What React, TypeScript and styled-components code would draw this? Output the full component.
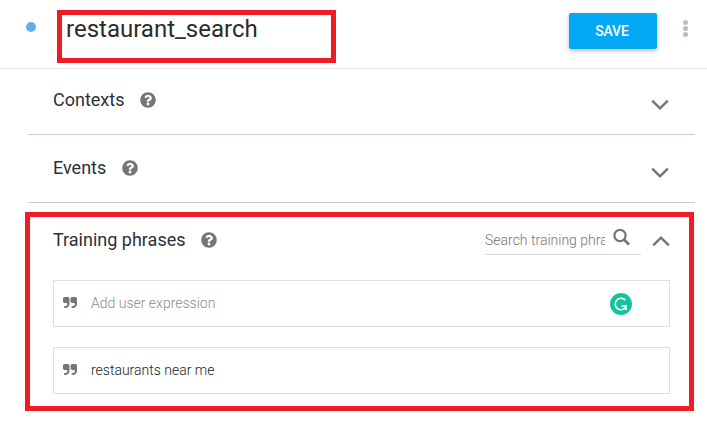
import React from 'react';
import styled, { createGlobalStyle } from 'styled-components';
import { FaQuestionCircle } from 'react-icons/fa';

const GlobalStyle = createGlobalStyle`
  * { box-sizing: border-box; }
  body { margin: 0; background: #fff; font-family: Roboto, sans-serif; }
`;

const Page = styled.main`
  width: 707px;
  height: 427px;
  overflow: hidden;
  background: #fff;
`;

const Header = styled.header`
  display: flex;
  align-items: flex-start;
  height: 69px;
  padding-left: 26px;
  border-bottom: 1px solid #e5e5e5;
`;

const StatusDot = styled.span`
  width: 10px;
  height: 10px;
  margin-top: 22px;
  border-radius: 50%;
  background: #67aeea;
`;

const TitleFrame = styled.div`
  width: 279px;
  height: 53px;
  margin: 10px 0 0 21px;
  padding-left: 4px;
  border: 5px solid #ee1c25;
`;

const Title = styled.h1`
  margin: 0;
  font-size: 24px;
  font-weight: 400;
  line-height: 28px;
  color: #2b2b2b;
`;

const SaveButton = styled.button`
  width: 88px;
  height: 36px;
  margin: 13px 0 0 233px;
  padding: 0 2px 0 0;
  border: 0;
  border-radius: 2px;
  background: #03a9f4;
  box-shadow: 0 2px 5px rgba(0, 0, 0, 0.26);
  color: #fff;
  font: 500 14px/34px Roboto, sans-serif;
  letter-spacing: -0.1px;
`;

const MenuButton = styled.div`
  display: flex;
  flex-direction: column;
  gap: 1px;
  margin: 20px 0 0 26px;
`;

const MenuDot = styled.span`
  width: 5px;
  height: 5px;
  border-radius: 50%;
  background: #b8bcc5;
`;

const Section = styled.section<{ $height: number; $top: number }>`
  display: flex;
  align-items: flex-start;
  height: ${(p) => p.$height}px;
  margin: 0 12px 0 28px;
  padding: ${(p) => p.$top}px 26px 0 25px;
  border-bottom: 1px solid #cdc7c9;
`;

const Heading = styled.h2`
  display: flex;
  align-items: center;
  gap: 15.5px;
  flex: 1;
  margin: 0;
  font-size: 18px;
  font-weight: 400;
  line-height: 22px;
  color: #2b303b;
`;

const HelpIcon = styled(FaQuestionCircle)`
  width: 16px;
  height: 16px;
  color: #757575;
`;

const ChevronIcon = styled.svg<{ $up?: boolean }>`
  flex: none;
  width: 18px;
  height: 12px;
  margin-top: ${(p) => (p.$up ? 6 : 10)}px;
  transform: ${(p) => (p.$up ? 'rotate(180deg)' : 'none')};
`;

const TrainingFrame = styled.section`
  width: 669px;
  height: 199px;
  margin: 9px 0 0 25px;
  padding: 12px 19px 0 23px;
  border: 5px solid #ee1c25;
`;

const TrainingHeader = styled.div`
  display: flex;
  align-items: flex-start;
  height: 51px;
`;

const SearchField = styled.div`
  display: flex;
  width: 156px;
  height: 26px;
  margin-right: 11px;
  border-bottom: 1px solid #dcdcdc;
`;

const SearchText = styled.span`
  width: 120px;
  overflow: hidden;
  white-space: nowrap;
  font-size: 14px;
  font-weight: 300;
  line-height: 23px;
  color: #757575;
`;

const SearchIcon = styled.svg`
  flex: none;
  width: 18px;
  height: 18px;
  margin-left: 8px;
`;

const PhraseRow = styled.div`
  display: flex;
  align-items: center;
  height: 47px;
  margin-bottom: 20px;
  padding: 0 37px 0 9px;
  border: 1px solid #dedede;
`;

const QuoteShape = styled.svg`
  flex: none;
  width: 14px;
  height: 11px;
  margin: 0 14px 2px 0;
  fill: #757575;
`;

const PhraseText = styled.span<{ $placeholder?: boolean }>`
  flex: 1;
  padding-bottom: 1px;
  font-size: 14px;
  font-weight: 300;
  line-height: 20px;
  color: ${(p) => (p.$placeholder ? '#8c8c8c' : '#222')};
`;

const AssistantBadge = styled.svg`
  width: 22px;
  height: 22px;
`;

const quoteMark =
  'M768 320v704q0 104-40.5 198.5t-109.5 163.5-163.5 109.5-198.5 40.5h-64q-26 0-45-19t-19-45v-128q0-26 19-45t45-19h64q106 0 181-75t75-181v-32q0-40-28-68t-68-28h-224q-80 0-136-56t-56-136v-384q0-80 56-136t136-56h384q80 0 136 56t56 136z';

const QuoteIcon = () => (
  <QuoteShape viewBox="0 128 1664 1408" preserveAspectRatio="none">
    <path d={quoteMark} />
    <path d={quoteMark} transform="translate(896 0)" />
  </QuoteShape>
);

const Chevron = ({ up }: { up?: boolean }) => (
  <ChevronIcon $up={up} viewBox="0 0 18 12" fill="none" stroke="#757575" strokeWidth="2.4">
    <path d="M1.2 1.7 9 9.4 16.8 1.7" />
  </ChevronIcon>
);

export default function App() {
  return (
    <Page>
      <GlobalStyle />
      <Header>
        <StatusDot />
        <TitleFrame>
          <Title>restaurant_search</Title>
        </TitleFrame>
        <SaveButton>SAVE</SaveButton>
        <MenuButton>
          <MenuDot />
          <MenuDot />
          <MenuDot />
        </MenuButton>
      </Header>
      <Section $height={66} $top={20}>
        <Heading>Contexts <HelpIcon /></Heading>
        <Chevron />
      </Section>
      <Section $height={68} $top={22}>
        <Heading>Events <HelpIcon /></Heading>
        <Chevron />
      </Section>
      <TrainingFrame>
        <TrainingHeader>
          <Heading>Training phrases <HelpIcon /></Heading>
          <SearchField>
            <SearchText>Search training phrases</SearchText>
            <SearchIcon viewBox="0 0 18 18" fill="none" stroke="#757575">
              <circle cx="7" cy="6.5" r="5.6" strokeWidth="2.2" />
              <path d="m11 10.5 5 5" strokeWidth="2.8" />
            </SearchIcon>
          </SearchField>
          <Chevron up />
        </TrainingHeader>
        <PhraseRow>
          <QuoteIcon />
          <PhraseText $placeholder>Add user expression</PhraseText>
          <AssistantBadge viewBox="0 0 22 22" fill="none">
            <circle cx="11" cy="11" r="11" fill="#15c39a" />
            <path d="M15.4 7.2A5.8 5.8 0 1 0 15.6 14.6" stroke="#fff" strokeWidth="1.6" />
            <path d="M11.4 12.8H16v4.2" stroke="#fff" strokeWidth="1.7" />
          </AssistantBadge>
        </PhraseRow>
        <PhraseRow>
          <QuoteIcon />
          <PhraseText>restaurants near me</PhraseText>
        </PhraseRow>
      </TrainingFrame>
    </Page>
  );
}
